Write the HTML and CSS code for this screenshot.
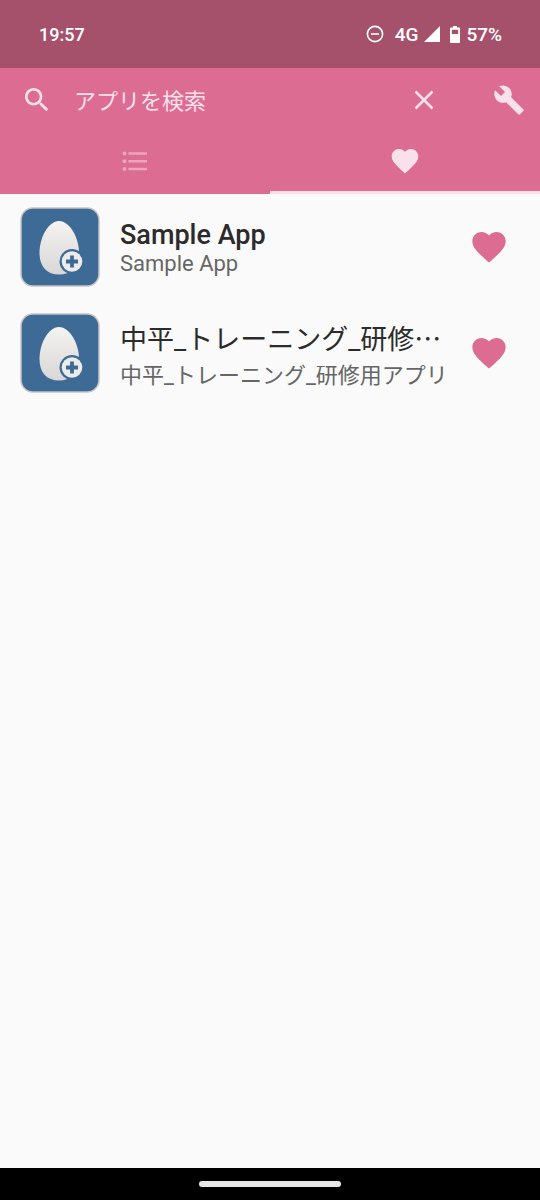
FILE: index.html
```html
<!DOCTYPE html>
<html lang="ja">
<head>
<meta charset="utf-8">
<meta name="viewport" content="width=device-width, initial-scale=1">
<title>アプリを検索</title>
<link rel="stylesheet" href="styles.css">
</head>
<body>
<svg class="defs" aria-hidden="true">
  <defs>
    <linearGradient id="shell" x1="0" y1="0" x2="0" y2="1">
      <stop offset="0" stop-color="#f5f3f1"/>
      <stop offset="1" stop-color="#d8d7d6"/>
    </linearGradient>
    <symbol id="heart" viewBox="0 0 24 24">
      <path d="M12 21.35l-1.45-1.32C5.4 15.36 2 12.28 2 8.5 2 5.42 4.42 3 7.5 3c1.74 0 3.41.81 4.5 2.09C13.09 3.81 14.76 3 16.5 3 19.58 3 22 5.42 22 8.5c0 3.78-3.4 6.86-8.55 11.54L12 21.35z"/>
    </symbol>
    <symbol id="egg" viewBox="0 0 80 80">
      <rect x="1" y="1" width="78" height="78" rx="12" fill="#3d6b96" stroke="#c4c4c4" stroke-width="1.5"/>
      <path d="M39 14C50 14 59 31 59 46C59 60 51 67.500 39 67.500C27 67.500 19.500 60 19.500 46C19.500 31 28 14 39 14Z" fill="url(#shell)"/>
      <circle cx="52" cy="54.500" r="12.500" fill="#3d6b96"/>
      <circle cx="52" cy="54.500" r="10.300" fill="#ecebea"/>
      <path d="M52 48.500v12M46 54.500h12" stroke="#3d6b96" stroke-width="3.800"/>
    </symbol>
  </defs>
</svg>
<div class="screen">
  <div class="status">
    <span class="time">19:57</span>
    <div class="status-right">
      <svg class="dnd" viewBox="0 0 18 18" aria-hidden="true"><circle cx="9" cy="9" r="7.600" fill="none" stroke="#fff" stroke-width="1.600"/><path d="M5 9h8" stroke="#fff" stroke-width="1.600"/></svg>
      <span class="network">4G</span>
      <svg class="signal" viewBox="0 0 16 16" aria-hidden="true"><path d="M16 0v16H0z" fill="#fff"/></svg>
      <svg class="battery" viewBox="0 0 10 17" aria-hidden="true"><path fill-rule="evenodd" d="M3 0h4v1.500h2a1 1 0 0 1 1 1v13.500a1 1 0 0 1-1 1H1a1 1 0 0 1-1-1V2.500a1 1 0 0 1 1-1h2zM1.800 3.800v4.200h6.400V3.800z" fill="#fff"/></svg>
      <span>57%</span>
    </div>
  </div>
  <header class="header">
    <form class="search" role="search">
      <label class="search-icon" for="query" aria-label="検索">
        <svg class="icon" viewBox="0 0 24 24"><path d="M15.500 14h-.79l-.28-.27C15.410 12.590 16 11.110 16 9.500 16 5.910 13.090 3 9.500 3S3 5.910 3 9.500 5.910 16 9.500 16c1.610 0 3.090-.59 4.230-1.570l.27.28v.79l5 4.990L20.490 19l-4.990-5zm-6 0C7.010 14 5 11.990 5 9.500S7.010 5 9.500 5 14 7.010 14 9.500 11.990 14 9.500 14z"/></svg>
      </label>
      <input class="query" id="query" type="text" placeholder="アプリを検索">
      <button class="tool" type="reset" aria-label="クリア">
        <svg class="icon" viewBox="0 0 32 32"><path class="cross" d="M7.500 7.500l17 17M24.500 7.500l-17 17"/></svg>
      </button>
      <button class="tool wrench" type="button" aria-label="設定">
        <svg class="icon" viewBox="0 0 24 24"><path d="M22.700 19l-9.100-9.100c.9-2.300.4-5-1.500-6.900-2-2-5-2.400-7.400-1.300L9 6 6 9 1.600 4.700C.4 7.100.9 10.100 2.900 12.100c1.900 1.900 4.600 2.400 6.900 1.500l9.100 9.100c.4.4 1 .4 1.400 0l2.300-2.300c.5-.4.5-1.100.1-1.400z"/></svg>
      </button>
    </form>
    <nav class="tabs">
      <button class="tab" type="button" aria-label="一覧">
        <svg class="icon dim" viewBox="0 0 32 32"><circle cx="5.500" cy="8.500" r="2"/><circle cx="5.500" cy="16.200" r="2"/><circle cx="5.500" cy="24" r="2"/><path d="M9.500 7.200H28v2.600H9.500zM9.500 15H28v2.600H9.500zM9.500 22.700H28v2.600H9.500z"/></svg>
      </button>
      <button class="tab selected" type="button" aria-label="お気に入り">
        <svg class="icon"><use href="#heart"/></svg>
      </button>
    </nav>
  </header>
  <main class="content">
    <ul class="apps">
      <li class="app">
        <svg class="app-icon" aria-hidden="true"><use href="#egg"/></svg>
        <div class="app-text">
          <div class="name">Sample App</div>
          <div class="label">Sample App</div>
        </div>
        <button class="favorite" type="button" aria-label="お気に入り"><svg class="big-heart"><use href="#heart"/></svg></button>
      </li>
      <li class="app">
        <svg class="app-icon" aria-hidden="true"><use href="#egg"/></svg>
        <div class="app-text">
          <div class="name name-ja">中平_トレーニング_研修⋯</div>
          <div class="label">中平_トレーニング_研修用アプリ</div>
        </div>
        <button class="favorite" type="button" aria-label="お気に入り"><svg class="big-heart"><use href="#heart"/></svg></button>
      </li>
    </ul>
  </main>
  <footer class="navbar"><div class="handle"></div></footer>
</div>
</body>
</html>
```
FILE: styles.css
```css
* { box-sizing: border-box; }
body {
  margin: 0;
  background: #fafafa;
  font-family: Roboto, "Noto Sans CJK JP", sans-serif;
}
button {
  border: 0;
  padding: 0;
  background: none;
  cursor: pointer;
}
svg { display: block; }
.defs { position: absolute; width: 0; height: 0; }
.screen {
  display: flex;
  flex-direction: column;
  min-height: 100vh;
}
.status {
  display: flex;
  align-items: center;
  justify-content: space-between;
  height: 68px;
  padding: 0 38px 0 39px;
  background: #a5516c;
  color: #fff;
  font-size: 19px;
  font-weight: 500;
}
.time { font-size: 18px; }
.status-right { display: flex; align-items: center; }
.dnd { width: 18px; height: 18px; margin-right: 11px; }
.network { margin-right: 6px; }
.signal { width: 16px; height: 16px; margin-right: 10px; }
.battery { width: 10px; height: 17px; margin-right: 6px; }
.header { background: #dd6c92; }
.search {
  display: flex;
  align-items: center;
  height: 64px;
  padding: 0 15px 0 21px;
}
.icon { width: 32px; height: 32px; fill: #f8e1ea; }
.dim { fill: #eba5be; }
.cross { fill: none; stroke: #f8e1ea; stroke-width: 2.5; }
.query {
  flex: 1;
  min-width: 0;
  height: 48px;
  margin-left: 21px;
  padding: 2px 0 0;
  border: 0;
  outline: 0;
  background: none;
  color: #f8e1ea;
  font: 22px Roboto, "Noto Sans CJK JP", sans-serif;
}
.query::placeholder { color: #f8e1ea; opacity: 1; }
.wrench { margin-left: 53px; }
.tabs { display: grid; grid-template-columns: 1fr 1fr; }
.tab {
  display: flex;
  align-items: center;
  justify-content: center;
  height: 62px;
  padding-bottom: 2px;
  border-bottom: 3px solid transparent;
}
.selected { border-bottom-color: #f8e1ea; }
.content { flex: 1; }
.apps { margin: 0; padding: 0; list-style: none; }
.app {
  display: flex;
  align-items: center;
  height: 106px;
  padding: 0 31px 0 20px;
}
.app-icon { flex: none; width: 80px; height: 80px; }
.app-text {
  flex: 1;
  min-width: 0;
  margin: 0 17px 0 20px;
  white-space: nowrap;
}
.name { color: #2b2b2b; font-size: 27px; font-weight: 500; }
.name-ja { font-weight: 400; }
.label { color: #666; font-size: 22px; }
.favorite { flex: none; }
.big-heart { width: 40px; height: 40px; fill: #dd6c92; }
.navbar {
  display: flex;
  align-items: center;
  justify-content: center;
  height: 32px;
  background: #000;
}
.handle {
  width: 142px;
  height: 6px;
  border-radius: 3px;
  background: #e8e8e8;
}
```
